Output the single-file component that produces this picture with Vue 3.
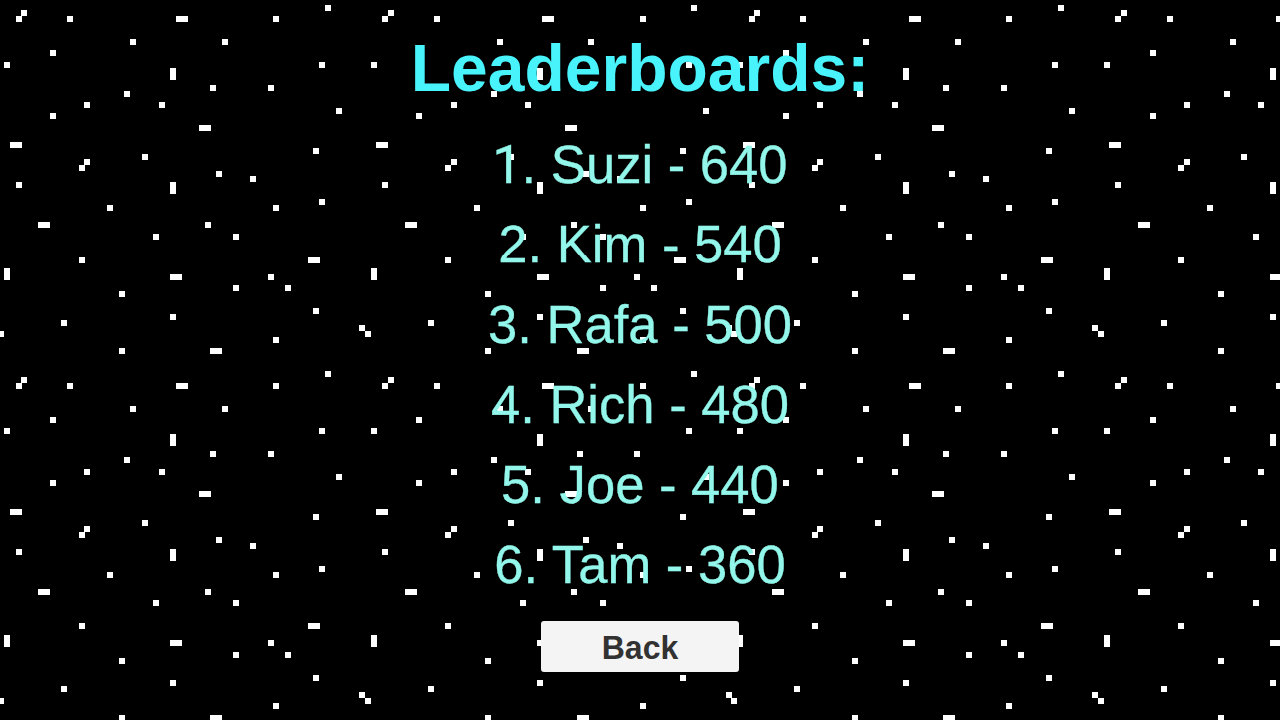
<script setup>
import { ref, reactive } from 'vue'

const title = ref('Leaderboards:')
const scores = reactive([
  { name: 'Suzi', score: 640 },
  { name: 'Kim', score: 540 },
  { name: 'Rafa', score: 500 },
  { name: 'Rich', score: 480 },
  { name: 'Joe', score: 440 },
  { name: 'Tam', score: 360 }
])

// stars of one 64 x 64 tile: [column, row, width, height]
const stars = [
  [57,1], [4,2], [3,3], [12,3], [31,3,2], [48,3], [23,7], [39,7], [9,9],
  [1,11], [56,11], [30,12,1,2], [37,15], [47,15], [22,16], [15,18], [28,18],
  [59,19], [9,20], [35,22,2], [2,25,2], [55,26], [25,27], [15,28], [14,29],
  [38,30], [44,31], [3,32], [30,32,1,2], [56,35], [19,36], [48,36], [7,39,2],
  [36,39], [27,41], [41,41], [14,45], [54,45,2], [1,47,1,2], [30,48,2],
  [47,48], [41,50], [50,50], [21,51], [55,54], [30,55], [11,56], [63,57],
  [0,58], [48,59], [21,61], [37,61,2]
]
const cell = 5.727
const offsetX = -1.6
const offsetY = -1.1
const sky = []
for (let ty = 0; ty < 2; ty++) {
  for (let tx = 0; tx < 4; tx++) {
    stars.forEach(([x, y, w = 1, h = 1]) => {
      sky.push({
        x: Math.round(offsetX + (x + tx * 64) * cell),
        y: Math.round(offsetY + (y + ty * 64) * cell),
        w: w * 6,
        h: h * 6
      })
    })
  }
}

const goBack = () => {
  window.history.back()
}
</script>

<template>
  <div class="screen">
    <svg class="sky" width="1280" height="720" shape-rendering="crispEdges">
      <rect v-for="(s, index) in sky" :key="index" :x="s.x" :y="s.y" :width="s.w" :height="s.h" />
    </svg>
    <div class="board">
      <h1>{{ title }}</h1>
      <ul>
        <li v-for="(item, index) in scores" :key="item.name"><span :class="{ first: index === 0 }">{{ index + 1 }}</span>. {{ item.name }} - {{ item.score }}</li>
      </ul>
      <button type="button" @click="goBack"><span>Back</span></button>
    </div>
  </div>
</template>

<style>
body {
  background: #000;
}
</style>

<style scoped>
.screen {
  position: relative;
  width: 1280px;
  height: 720px;
  overflow: hidden;
  background: #000;
  font-family: "Liberation Sans", Arial, sans-serif;
}
.sky {
  position: absolute;
  top: 0;
  left: 0;
  fill: #fff;
}
.board {
  position: relative;
  display: flex;
  flex-direction: column;
  align-items: center;
}
h1 {
  margin: 28px 0 0;
  height: 96px;
  line-height: 80px;
  font-size: 66px;
  font-weight: bold;
  color: #48f3fb;
  transform: scaleY(1.02);
  transform-origin: 50% 62.8px;
}
ul {
  margin: 0;
  padding: 0;
  list-style: none;
  text-align: center;
}
li {
  height: 80px;
  line-height: 80px;
  font-size: 52.6px;
  color: #92f6ea;
  -webkit-text-stroke: 0.3px #92f6ea;
  white-space: nowrap;
  transform: translateY(0.5px) scaleY(1.02);
  transform-origin: 50% 58px;
}
.first {
  display: inline-block;
  width: 0.556em;
  line-height: 1;
  font-family: Roboto, sans-serif;
}
button {
  margin-top: 17px;
  width: 198px;
  height: 51px;
  padding: 0;
  border: 0;
  border-radius: 3px;
  background: #f4f4f4;
  color: #323232;
  font-family: inherit;
  font-size: 32px;
  font-weight: bold;
}
button span {
  display: block;
  padding-top: 3px;
  transform: scaleY(1.02);
}
</style>
